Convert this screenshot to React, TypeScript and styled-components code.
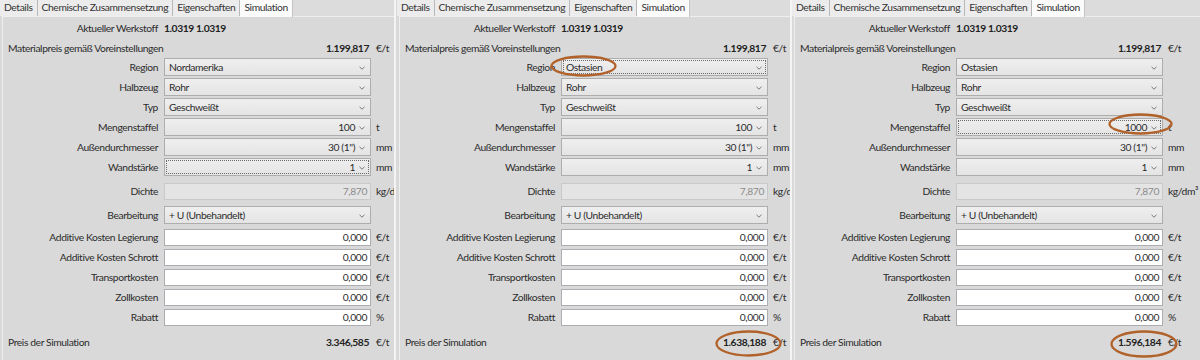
import React, {FC} from 'react';
import styled, {createGlobalStyle, css} from 'styled-components';

const GlobalStyle = createGlobalStyle`
	html, body {
		margin: 0;
		padding: 0;
		background: #f4f4f4;
	}
	body {
		font-family: Lato, 'Noto Sans', sans-serif;
		font-size: 10.3px;
		letter-spacing: -0.4px;
		color: #2c2c2c;
	}
`;

const StyledScreen = styled.div`
	display: flex;
	gap: 2px;
	width: 1200px;
	height: 360px;
	overflow: hidden;
	background: #f4f4f4;
`;

const StyledPanel = styled.div<{$width: number; $shift: number}>`
	position: relative;
	flex: 0 0 ${(p) => p.$width}px;
	height: 360px;
	overflow: hidden;
	background: #d9d9d9;
	padding-left: ${(p) => p.$shift}px;
	box-sizing: border-box;
`;

const StyledWindow = styled.div`
	display: flex;
	flex-direction: column;
	width: 430px;
	height: 360px;
`;

const StyledTabStrip = styled.div`
	display: flex;
	height: 16px;
	background: #dcdcdc;
`;

const StyledTab = styled.div<{$active?: boolean}>`
	padding: 0 4px;
	line-height: 15px;
	white-space: nowrap;
	border-right: 1px solid #b9b9b9;
	background: #ececec;
	color: #333;

	${(p) =>
		p.$active &&
		css`
			background: #fbfbfb;
			height: 17px;
			border-right: 1px solid #c4c4c4;
			position: relative;
			z-index: 1;
		`}
`;

const StyledContent = styled.div`
	flex: 1;
	margin-left: 2px;
	border-left: 1px solid #efefef;
	border-top: 1px solid #efefef;
	display: flex;
	flex-direction: column;
`;

const StyledRow = styled.div<{$h?: number; $mt?: number}>`
	display: grid;
	grid-template-columns: 155px 207px auto;
	column-gap: 6px;
	align-items: center;
	height: ${(p) => p.$h ?? 20}px;
	margin-top: ${(p) => p.$mt ?? 0}px;
	white-space: nowrap;
`;

const StyledLabel = styled.div`
	text-align: right;
`;

const StyledWideLabel = styled.div`
	grid-column: 1 / 3;
	display: flex;
	justify-content: space-between;
	padding-left: 5px;
	padding-right: 2px;
`;

const StyledBold = styled.span`
	font-weight: 700;
	color: #222;
`;

const StyledUnit = styled.div`
	margin-left: -1px;
`;

const StyledCombo = styled.div<{$right?: boolean; $focused?: boolean}>`
	position: relative;
	display: flex;
	align-items: center;
	justify-content: ${(p) => (p.$right ? 'flex-end' : 'flex-start')};
	height: 18px;
	box-sizing: border-box;
	border: 1px solid #adadad;
	background: linear-gradient(#efefef, #e4e4e4);
	padding: ${(p) => (p.$right ? '0 15px 0 0' : '0 0 0 4px')};

	${(p) =>
		p.$focused &&
		css`
			&::after {
				content: '';
				position: absolute;
				inset: 1px;
				border: 1px dotted #6a6a6a;
			}
		`}
`;

const StyledChevron = styled.svg`
	position: absolute;
	right: 5px;
	top: 7px;
`;

const StyledTextBox = styled.div<{$disabled?: boolean}>`
	height: 17px;
	box-sizing: border-box;
	border: 1px solid ${(p) => (p.$disabled ? '#c9c9c9' : '#abadb3')};
	background: ${(p) => (p.$disabled ? '#e4e4e4' : '#ffffff')};
	color: ${(p) => (p.$disabled ? '#8c8c8c' : '#2e2e2e')};
	text-align: right;
	padding-right: 3px;
	line-height: 15px;
`;

const StyledMark = styled.svg<{$x: number; $y: number}>`
	position: absolute;
	left: ${(p) => p.$x}px;
	top: ${(p) => p.$y}px;
	z-index: 5;
	overflow: visible;
`;

interface IMark {
	x: number;
	y: number;
	w: number;
	h: number;
}

interface IPanel {
	width: number;
	shift: number;
	region: string;
	menge: string;
	focus: 'region' | 'menge' | 'wand';
	preis: string;
	marks: IMark[];
}

const panels: IPanel[] = [
	{width: 394, shift: 0, region: 'Nordamerika', menge: '100', focus: 'wand', preis: '3.346,585', marks: []},
	{
		width: 394,
		shift: 1,
		region: 'Ostasien',
		menge: '100',
		focus: 'region',
		preis: '1.638,188',
		marks: [
			{x: 154, y: 55, w: 67, h: 22},
			{x: 319, y: 330, w: 67, h: 27}
		]
	},
	{
		width: 408,
		shift: 0,
		region: 'Ostasien',
		menge: '1000',
		focus: 'menge',
		preis: '1.596,184',
		marks: [
			{x: 316, y: 113, w: 65, h: 22},
			{x: 318, y: 330, w: 68, h: 28}
		]
	}
];

const Chevron: FC = () => (
	<StyledChevron width='6' height='4' viewBox='0 0 6 4'>
		<polyline points='0.5,0.8 3,3.2 5.5,0.8' fill='none' stroke='#7a7a7a' strokeWidth='1' />
	</StyledChevron>
);

interface IComboRow {
	label: string;
	value: string;
	unit?: string;
	right?: boolean;
	focused?: boolean;
}

const ComboRow: FC<IComboRow> = ({label, value, unit, right, focused}) => (
	<StyledRow>
		<StyledLabel>{label}</StyledLabel>
		<StyledCombo $right={right} $focused={focused}>
			{value}
			<Chevron />
		</StyledCombo>
		{unit ? <StyledUnit>{unit}</StyledUnit> : <span />}
	</StyledRow>
);

interface ITextRow {
	label: string;
	value: string;
	unit: string;
	mt?: number;
}

const TextRow: FC<ITextRow> = ({label, value, unit, mt}) => (
	<StyledRow $mt={mt}>
		<StyledLabel>{label}</StyledLabel>
		<StyledTextBox>{value}</StyledTextBox>
		<StyledUnit>{unit}</StyledUnit>
	</StyledRow>
);

const Mark: FC<{mark: IMark}> = ({mark: {x, y, w, h}}) => (
	<StyledMark $x={x} $y={y} width={w} height={h} viewBox={`0 0 ${w} ${h}`}>
		<ellipse cx={w / 2} cy={h / 2} rx={w / 2 - 1.5} ry={h / 2 - 1.5} fill='none' stroke='#b1622a' strokeWidth='2.3' />
	</StyledMark>
);

const SimulationPanel: FC<{panel: IPanel}> = ({panel}) => (
	<StyledPanel $width={panel.width} $shift={panel.shift}>
		<StyledWindow>
			<StyledTabStrip>
				<StyledTab>Details</StyledTab>
				<StyledTab>Chemische Zusammensetzung</StyledTab>
				<StyledTab>Eigenschaften</StyledTab>
				<StyledTab $active>Simulation</StyledTab>
			</StyledTabStrip>
			<StyledContent>
				<StyledRow $h={21}>
					<StyledLabel>Aktueller Werkstoff</StyledLabel>
					<StyledBold>1.0319 1.0319</StyledBold>
				</StyledRow>
				<StyledRow $h={19}>
					<StyledWideLabel>
						<span>Materialpreis gemäß Voreinstellungen</span>
						<StyledBold>1.199,817</StyledBold>
					</StyledWideLabel>
					<StyledUnit>€/t</StyledUnit>
				</StyledRow>
				<ComboRow label='Region' value={panel.region} focused={panel.focus === 'region'} />
				<ComboRow label='Halbzeug' value='Rohr' />
				<ComboRow label='Typ' value='Geschweißt' />
				<ComboRow label='Mengenstaffel' value={panel.menge} unit='t' right focused={panel.focus === 'menge'} />
				<ComboRow label='Außendurchmesser' value='30 (1")' unit='mm' right />
				<ComboRow label='Wandstärke' value='1' unit='mm' right focused={panel.focus === 'wand'} />
				<StyledRow $h={28}>
					<StyledLabel>Dichte</StyledLabel>
					<StyledTextBox $disabled>7,870</StyledTextBox>
					<StyledUnit>kg/dm³</StyledUnit>
				</StyledRow>
				<ComboRow label='Bearbeitung' value='+ U (Unbehandelt)' />
				<TextRow label='Additive Kosten Legierung' value='0,000' unit='€/t' mt={2} />
				<TextRow label='Additive Kosten Schrott' value='0,000' unit='€/t' />
				<TextRow label='Transportkosten' value='0,000' unit='€/t' />
				<TextRow label='Zollkosten' value='0,000' unit='€/t' />
				<TextRow label='Rabatt' value='0,000' unit='%' />
				<StyledRow $h={30}>
					<StyledWideLabel>
						<StyledLabel>Preis der Simulation</StyledLabel>
						<StyledBold>{panel.preis}</StyledBold>
					</StyledWideLabel>
					<StyledUnit>€/t</StyledUnit>
				</StyledRow>
			</StyledContent>
		</StyledWindow>
		{panel.marks.map((m) => (
			<Mark key={`${m.x}-${m.y}`} mark={m} />
		))}
	</StyledPanel>
);

const App: FC = () => (
	<>
		<GlobalStyle />
		<StyledScreen>
			{panels.map((p) => (
				<SimulationPanel key={p.preis} panel={p} />
			))}
		</StyledScreen>
	</>
);

export default App;
